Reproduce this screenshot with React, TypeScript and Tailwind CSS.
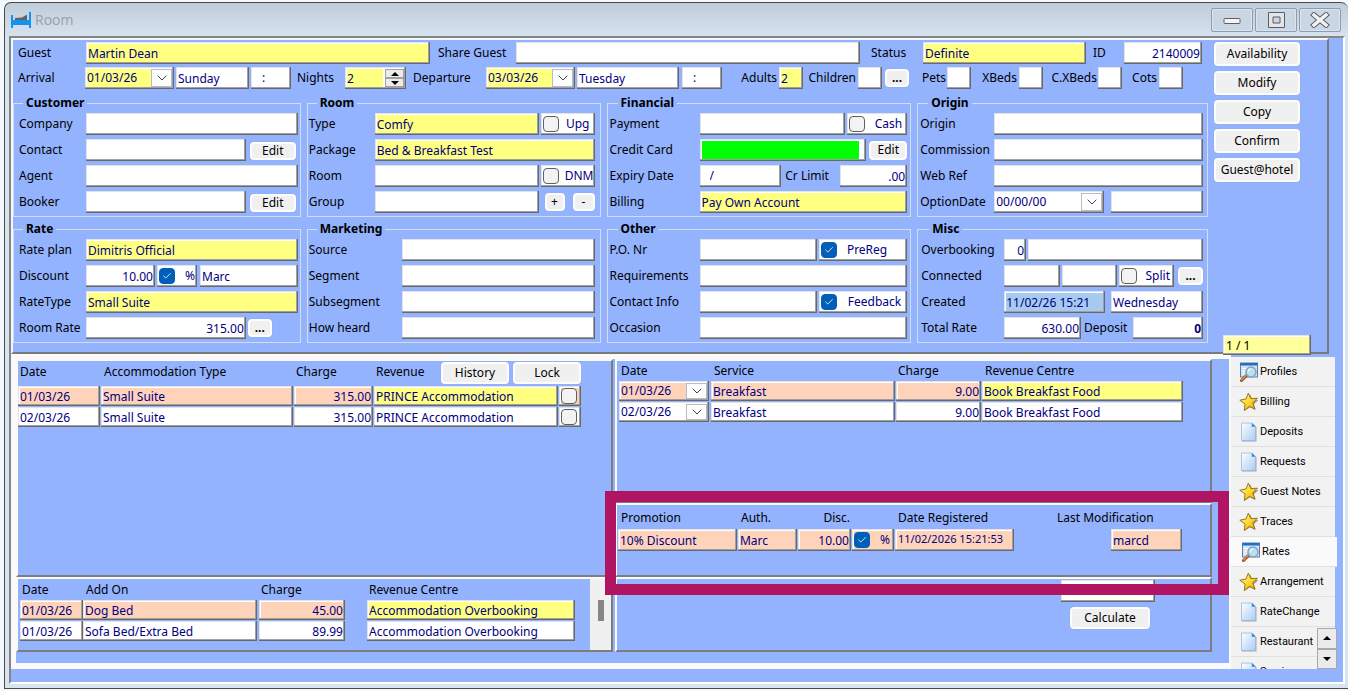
import React from 'react'
import clsx from 'clsx'
import { Check, ChevronDown } from 'lucide-react'

const bevel =
  "shadow-[inset_-1px_-1px_0_#696969,inset_-2px_-2px_0_#a0a0a0,inset_1px_1px_0_#e3e3e3,inset_2px_2px_0_#ffffff]"

const tones = {
  white: "bg-white",
  yellow: "bg-[#ffff80]",
  peach: "bg-[#ffd3ba]",
  blue: "bg-[#a6caf0]"
}

type Tone = keyof typeof tones

type FieldProps = {
  label: string
  value?: string
  tone?: Tone
  className?: string
}

const Field = ({ label, value = "", tone = "white", className = "flex-1" }: FieldProps) => (
  <input
    type="text"
    aria-label={label}
    defaultValue={value}
    className={clsx("h-[22px] min-w-0 rounded-none px-[2px] text-[12px] text-[#00007f] outline-none", bevel, tones[tone], className)}
  />
)

const Combo = ({ label, value, tone = "white", className = "w-[88px]", height = "h-[22px]" }: FieldProps & { height?: string }) => (
  <div className={clsx("relative flex", height, bevel, tones[tone], className)}>
    <select
      aria-label={label}
      className="h-full w-full appearance-none px-[2px] text-[12px] text-[#00007f] outline-none"
    >
      <option>{value}</option>
    </select>
    <span className="pointer-events-none absolute top-[2px] right-[2px] bottom-[2px] flex w-[21px] items-center justify-center border border-[#b4bccb] bg-[#fdfdfd] text-[#444444]">
      <ChevronDown size={16} strokeWidth={1.5} />
    </span>
  </div>
)

const Tick = ({ label, checked = false, id }: { label?: string; checked?: boolean; id?: string }) => (
  <span className="grid h-4 w-4 shrink-0">
    <input
      id={id}
      type="checkbox"
      aria-label={label}
      defaultChecked={checked}
      className="peer h-4 w-4 appearance-none rounded-[4px] border border-[#5f5f5f] bg-[#f3f3f3] [grid-area:1/1] checked:border-[#005fb8] checked:bg-[#005fb8]"
    />
    <Check
      size={10}
      strokeWidth={2}
      className="pointer-events-none invisible place-self-center text-white [grid-area:1/1] peer-checked:visible"
    />
  </span>
)

type TickFieldProps = {
  label: string
  checked?: boolean
  tone?: Tone
  className?: string
}

const TickField = ({ label, checked, tone = "white", className = "pr-[5px]" }: TickFieldProps) => (
  <label className={clsx("flex h-[22px] shrink-0 items-center justify-between pl-[2px] text-[12px] text-[#00007f]", bevel, tones[tone], className)}>
    <Tick checked={checked} />
    <span>{label}</span>
  </label>
)

const Button = ({ children, className, label }: { children: React.ReactNode; className?: string; label?: string }) => (
  <button
    type="button"
    aria-label={label}
    className={clsx("flex shrink-0 items-center justify-center rounded-[4px] border-2 border-[#fdfdfd] bg-[#f0f0f0] text-[12px] leading-none whitespace-nowrap text-black shadow-[0_0_1px_#8d99b5]", className)}
  >
    {children}
  </button>
)

const Caption = ({ children, className }: { children: React.ReactNode; className?: string }) => (
  <span className={clsx("shrink-0 whitespace-nowrap", className)}>{children}</span>
)

const Group = ({ title, className, legend = "ml-2", children }: { title: string; className?: string; legend?: string; children: React.ReactNode }) => (
  <fieldset className={clsx("min-w-0 border border-[#d5dcea] pb-[3px]", className)}>
    <legend className={clsx("px-[3px] text-[12px] leading-4 font-bold", legend)}>{title}</legend>
    <div className="flex flex-col gap-1 pt-[2px]">{children}</div>
  </fieldset>
)

const Row = ({ label, width, children }: { label: string; width: string; children: React.ReactNode }) => (
  <div className="flex h-[22px] items-center">
    <Caption className={width}>{label}</Caption>
    <div className="flex min-w-0 flex-1 items-center gap-[2px]">{children}</div>
  </div>
)

const Panel = ({ className, children }: { className?: string; children?: React.ReactNode }) => (
  <section className={clsx("min-w-0 border-2 border-t-[#fafafa] border-r-[#7d7d7d] border-b-[#7d7d7d] border-l-[#fafafa]", className)}>
    {children}
  </section>
)

const CellInput = ({ label, value, tone = "white", right }: FieldProps & { right?: boolean }) => (
  <input
    type="text"
    aria-label={label}
    defaultValue={value}
    className={clsx("block h-5 w-full min-w-0 rounded-none px-[2px] text-[12px] text-[#00007f] outline-none", right && "text-right", bevel, tones[tone])}
  />
)

const accommodation: { date: string; type: string; charge: string; revenue: string; tone: Tone; revenueTone: Tone }[] = [
  { date: "01/03/26", type: "Small Suite", charge: "315.00", revenue: "PRINCE Accommodation", tone: "peach", revenueTone: "yellow" },
  { date: "02/03/26", type: "Small Suite", charge: "315.00", revenue: "PRINCE Accommodation", tone: "white", revenueTone: "white" }
]

const services: { date: string; service: string; charge: string; centre: string; tone: Tone; centreTone: Tone }[] = [
  { date: "01/03/26", service: "Breakfast", charge: "9.00", centre: "Book Breakfast Food", tone: "peach", centreTone: "yellow" },
  { date: "02/03/26", service: "Breakfast", charge: "9.00", centre: "Book Breakfast Food", tone: "white", centreTone: "white" }
]

const addOns: { date: string; name: string; charge: string; centre: string; tone: Tone; centreTone: Tone }[] = [
  { date: "01/03/26", name: "Dog Bed", charge: "45.00", centre: "Accommodation Overbooking", tone: "peach", centreTone: "yellow" },
  { date: "01/03/26", name: "Sofa Bed/Extra Bed", charge: "89.99", centre: "Accommodation Overbooking", tone: "white", centreTone: "white" }
]

const actions = ["Availability", "Modify", "Copy", "Confirm", "Guest@hotel"]

const StarIcon = () => (
  <svg width="20" height="20" viewBox="0 0 20 20" className="shrink-0">
    <defs>
      <linearGradient id="star" x1="0" y1="0" x2="1" y2="1">
        <stop offset="0" stopColor="#fffbb0" />
        <stop offset="0.5" stopColor="#ffd92e" />
        <stop offset="1" stopColor="#e8a200" />
      </linearGradient>
    </defs>
    <path d="M11 2l2.4 5.6 6 .6-4.6 4 1.6 6-5.2-3-5.2 3.4 1.2-6.2L2.2 8.6l6-.8z" fill="#777777" opacity="0.7" />
    <path d="M9.300 1.200l2.500 5.400 6.600-.4-4.700 4.800 2.400 6-5.800-2.600-5 4.200.8-6.600L.800 8.200l6.200-1.200z" fill="url(#star)" stroke="#8f6a10" strokeWidth="0.9" strokeLinejoin="round" />
  </svg>
)

const PageIcon = () => (
  <svg width="20" height="20" viewBox="0 0 20 20" className="shrink-0">
    <defs>
      <linearGradient id="page" x1="0" y1="0" x2="1" y2="1">
        <stop offset="0" stopColor="#ffffff" />
        <stop offset="1" stopColor="#a9cbf3" />
      </linearGradient>
    </defs>
    <path d="M3 1.5h11l3.5 4V19.5H3z" fill="#6f7a88" opacity="0.6" />
    <path d="M2.5 1H13l3.5 3.5V18.5h-14z" fill="url(#page)" stroke="#9db8dc" strokeWidth="0.8" />
    <path d="M12.8 1l3.8 3.8h-3.8z" fill="#2d86dd" />
  </svg>
)

const SearchIcon = () => (
  <svg width="20" height="20" viewBox="0 0 20 20" className="shrink-0">
    <rect x="1.5" y="1" width="17" height="14" fill="#d4e3f5" stroke="#5b7fae" />
    <rect x="1.5" y="1" width="17" height="2.500" fill="#1f6fc9" />
    <path d="M3.5 6.5h4M3.5 9h3M3.5 11.500h2" stroke="#ffffff" />
    <path d="M7.500 13.500l-5 5" stroke="#8a4a1c" strokeWidth="3" strokeLinecap="round" />
    <path d="M7.300 13.300l-4.600 4.700" stroke="#e0904e" strokeWidth="1.500" strokeLinecap="round" />
    <circle cx="12" cy="10" r="5" fill="#b5e0f5" stroke="#8ea3b6" strokeWidth="1.500" />
    <path d="M9.300 9.300a3 3 0 0 1 3-2.300" stroke="#ffffff" strokeWidth="1.200" fill="none" />
  </svg>
)

const icons = { star: StarIcon, page: PageIcon, search: SearchIcon }

const tabs: { name: string; icon: keyof typeof icons }[] = [
  { name: "Profiles", icon: "search" },
  { name: "Billing", icon: "star" },
  { name: "Deposits", icon: "page" },
  { name: "Requests", icon: "page" },
  { name: "Guest Notes", icon: "star" },
  { name: "Traces", icon: "star" },
  { name: "Rates", icon: "search" },
  { name: "Arrangement", icon: "star" },
  { name: "RateChange", icon: "page" },
  { name: "Restaurant", icon: "page" },
  { name: "Services", icon: "page" }
]

const Arrow = ({ down }: { down?: boolean }) => (
  <svg width="8" height="4" viewBox="0 0 8 4">
    <path d={down ? "M0 0h8L4 4z" : "M0 4h8L4 0z"} fill="#000000" />
  </svg>
)

const TitleBar = () => (
  <header className="flex h-[33px] items-center pt-px pr-[4px] pl-[2px]">
    <svg width="20" height="17" viewBox="0 0 20 17">
      <path d="M4 8V6l7-.500 5-3V9H4z" fill="#5f6468" />
      <path d="M1 3v13M19 0v16" stroke="#0f95f5" strokeWidth="2" />
      <rect x="1" y="8" width="18" height="5" fill="#1592ee" />
    </svg>
    <h1 className="ml-[4px] flex-1 font-['Open_Sans',sans-serif] text-[14px] text-[#9a9ea3]">Room</h1>
    <div className="flex gap-[2px]">
      {["Minimize", "Maximize", "Close"].map((name) => (
        <button
          key={name}
          type="button"
          aria-label={name}
          className="flex h-6 w-[42px] items-center justify-center rounded-[2px] border border-[#8d9bb4] bg-[#c9d6e4] shadow-[inset_0_0_0_1px_#d9e4ef]"
        >
          {name === "Minimize" && (
            <svg width="18" height="14" viewBox="0 0 18 14">
              <rect x="1" y="5.500" width="16" height="5" rx="1" fill="#f5f5f5" stroke="#5b5d6b" />
            </svg>
          )}
          {name === "Maximize" && (
            <svg width="17" height="16" viewBox="0 0 17 16">
              <path d="M0.500 0.500h16v15h-16zM5 5v6h7V5z" fill="#e4e4e4" fillRule="evenodd" stroke="#5b5d6b" />
            </svg>
          )}
          {name === "Close" && (
            <svg width="20" height="16" viewBox="0 0 20 16">
              <path d="M4 3l12 10M16 3L4 13" stroke="#5b5d6b" strokeWidth="5.500" strokeLinecap="square" />
              <path d="M4 3l12 10M16 3L4 13" stroke="#f2f2f2" strokeWidth="3.500" strokeLinecap="square" />
            </svg>
          )}
        </button>
      ))}
    </div>
  </header>
)

const BookingHeader = () => (
  <div className="flex flex-col gap-[3px] pr-[6px] pl-[5px]">
    <div className="flex items-center">
      <Caption className="w-[68px]">Guest</Caption>
      <Field label="Guest" value="Martin Dean" tone="yellow" />
      <Caption className="w-[86px] pl-2">Share Guest</Caption>
      <Field label="Share Guest" />
      <Caption className="w-[63px] pl-[11px]">Status</Caption>
      <Field label="Status" value="Definite" tone="yellow" className="w-[163px]" />
      <Caption className="w-[38px] pl-[7px]">ID</Caption>
      <Field label="ID" value="2140009" className="w-[78px] text-right" />
    </div>
    <div className="flex items-center pr-[19px]">
      <Caption className="w-[67px]">Arrival</Caption>
      <Combo label="Arrival" value="01/03/26" tone="yellow" className="mr-[2px] w-[89px]" />
      <Field label="Arrival day" value="Sunday" className="mr-[2px] w-[73px]" />
      <div className={clsx("flex h-[22px] w-10 bg-white pl-[9px]", bevel)}>
        <input type="text" aria-label="Arrival time" defaultValue=":" className="w-[26px] px-[2px] text-[12px] text-[#00007f] outline-none" />
      </div>
      <Caption className="w-[54px] pl-[6px]">Nights</Caption>
      <div className={clsx("flex h-[22px] w-[61px] items-center bg-white p-[2px]", bevel)}>
        <input
          type="text"
          aria-label="Nights"
          defaultValue="2"
          className="h-full w-9 bg-[#ffff80] text-[12px] text-[#00007f] outline-none"
        />
        <div className="ml-[2px] flex h-full flex-1 flex-col">
          <button type="button" aria-label="More nights" className="flex flex-1 items-center justify-center border border-[#a0a0a0] bg-[#ececec]">
            <Arrow />
          </button>
          <button type="button" aria-label="Fewer nights" className="flex flex-1 items-center justify-center border border-[#a0a0a0] bg-[#ececec]">
            <Arrow down />
          </button>
        </div>
      </div>
      <Caption className="w-20 pl-[7px]">Departure</Caption>
      <Combo label="Departure" value="03/03/26" tone="yellow" className="mr-[2px] w-[89px]" />
      <Field label="Departure day" value="Tuesday" className="mr-[3px] flex-1" />
      <div className={clsx("flex h-[22px] w-10 bg-white pl-[9px]", bevel)}>
        <input type="text" aria-label="Departure time" defaultValue=":" className="w-[26px] px-[2px] text-[12px] text-[#00007f] outline-none" />
      </div>
      <Caption className="w-[57px] pr-[2px] text-right">Adults</Caption>
      <Field label="Adults" value="2" tone="yellow" className="w-6" />
      <Caption className="w-[55px] pr-[2px] text-right">Children</Caption>
      <Field label="Children" className="w-6" />
      <Button label="More guests" className="ml-[3px] h-[18px] w-6 font-bold">...</Button>
      <Caption className="w-[38px] pr-px text-right">Pets</Caption>
      <Field label="Pets" className="w-6" />
      <Caption className="w-12 pr-[2px] text-right">XBeds</Caption>
      <Field label="XBeds" className="w-6" />
      <Caption className="w-[55px] pr-px text-right">C.XBeds</Caption>
      <Field label="C.XBeds" className="w-6" />
      <Caption className="w-[37px] pr-[2px] text-right">Cots</Caption>
      <Field label="Cots" className="w-6" />
    </div>
  </div>
)

const BookingGroups = () => (
  <div className="mt-[6px] grid grid-cols-[288fr_294fr_305fr_291fr] gap-x-[6px] gap-y-1">
    <Group title="Customer" legend="ml-1" className="pr-[2px] pl-[5px]">
      <Row label="Company" width="w-[67px]">
        <Field label="Company" />
      </Row>
      <Row label="Contact" width="w-[67px]">
        <Field label="Contact" />
        <Button className="mx-[2px] mt-px h-[18px] w-[46px]">Edit</Button>
      </Row>
      <Row label="Agent" width="w-[67px]">
        <Field label="Agent" />
      </Row>
      <Row label="Booker" width="w-[67px]">
        <Field label="Booker" />
        <Button className="mx-[2px] mt-px h-[18px] w-[46px]">Edit</Button>
      </Row>
    </Group>

    <Group title="Room" className="pr-[5px] pl-px">
      <Row label="Type" width="w-[66px]">
        <Field label="Type" value="Comfy" tone="yellow" />
        <TickField label="Upg" className="w-[54px] pr-[5px]" />
      </Row>
      <Row label="Package" width="w-[66px]">
        <Field label="Package" value="Bed & Breakfast Test" tone="yellow" />
      </Row>
      <Row label="Room" width="w-[66px]">
        <Field label="Room" />
        <TickField label="DNM" className="w-[54px] pr-px" />
      </Row>
      <Row label="Group" width="w-[66px]">
        <Field label="Group" />
        <Button className="mr-[6px] ml-[4px] h-[18px] w-5">+</Button>
        <Button className="h-[18px] w-[22px]">-</Button>
      </Row>
    </Group>

    <Group title="Financial" className="pr-[3px] pl-[2px]">
      <Row label="Payment" width="w-[90px]">
        <Field label="Payment" />
        <TickField label="Cash" className="w-[60px] pr-[5px]" />
      </Row>
      <Row label="Credit Card" width="w-[90px]">
        <div className={clsx("flex h-[22px] flex-1 items-center bg-white pr-[7px] pl-[2px]", bevel)}>
          <input type="text" aria-label="Credit Card" className="h-[18px] w-full min-w-0 bg-[#00ff00] outline-none" />
        </div>
        <Button className="ml-px h-[19px] w-[38px]">Edit</Button>
      </Row>
      <Row label="Expiry Date" width="w-[90px]">
        <div className={clsx("flex h-[22px] min-w-0 flex-1 bg-white pl-[8px]", bevel)}>
          <input type="text" aria-label="Expiry Date" defaultValue="/" className="mr-[2px] w-full min-w-0 px-[2px] text-[12px] text-[#00007f] outline-none" />
        </div>
        <Caption className="w-[55px] pl-[2px]">Cr Limit</Caption>
        <Field label="Cr Limit" value=".00" className="w-[67px] text-right" />
      </Row>
      <Row label="Billing" width="w-[90px]">
        <Field label="Billing" value="Pay Own Account" tone="yellow" />
      </Row>
    </Group>

    <Group title="Origin" className="pr-[4px] pl-[2px]">
      <Row label="Origin" width="w-[74px]">
        <Field label="Origin" />
      </Row>
      <Row label="Commission" width="w-[74px]">
        <Field label="Commission" />
      </Row>
      <Row label="Web Ref" width="w-[74px]">
        <Field label="Web Ref" />
      </Row>
      <Row label="OptionDate" width="w-[74px]">
        <Combo label="OptionDate" value="00/00/00" className="mr-[5px] flex-1" />
        <Field label="Option day" className="w-[92px]" />
      </Row>
    </Group>

    <Group title="Rate" legend="ml-1" className="pr-[2px] pl-[5px]">
      <Row label="Rate plan" width="w-[67px]">
        <Field label="Rate plan" value="Dimitris Official" tone="yellow" />
      </Row>
      <Row label="Discount" width="w-[67px]">
        <Field label="Discount" value="10.00" className="w-[69px] text-right" />
        <TickField label="%" checked className="w-10 pr-[2px]" />
        <Field label="Discount authorised by" value="Marc" className="ml-px flex-1" />
      </Row>
      <Row label="RateType" width="w-[67px]">
        <Field label="RateType" value="Small Suite" tone="yellow" />
      </Row>
      <Row label="Room Rate" width="w-[67px]">
        <Field label="Room Rate" value="315.00" className="flex-1 text-right" />
        <Button label="Room rate details" className="mr-[26px] h-[18px] w-6 font-bold">...</Button>
      </Row>
    </Group>

    <Group title="Marketing" className="pr-[5px] pl-px">
      {["Source", "Segment", "Subsegment", "How heard"].map((name) => (
        <Row key={name} label={name} width="w-[93px]">
          <Field label={name} />
        </Row>
      ))}
    </Group>

    <Group title="Other" className="pr-[3px] pl-[2px]">
      <Row label="P.O. Nr" width="w-[90px]">
        <Field label="P.O. Nr" />
        <TickField label="PreReg" checked className="w-[88px] pr-[20px]" />
      </Row>
      <Row label="Requirements" width="w-[90px]">
        <Field label="Requirements" />
      </Row>
      <Row label="Contact Info" width="w-[90px]">
        <Field label="Contact Info" />
        <TickField label="Feedback" checked className="w-[88px] pr-[6px]" />
      </Row>
      <Row label="Occasion" width="w-[90px]">
        <Field label="Occasion" />
      </Row>
    </Group>

    <Group title="Misc" className="pr-[4px] pl-[3px]">
      <Row label="Overbooking" width="w-[83px]">
        <Field label="Overbooking" value="0" className="w-[22px] text-right" />
        <Field label="Overbooking note" />
      </Row>
      <Row label="Connected" width="w-[83px]">
        <Field label="Connected" />
        <Field label="Connected to" />
        <TickField label="Split" className="w-[55px] pr-[4px]" />
        <Button label="Split details" className="ml-[2px] h-[18px] w-[25px] font-bold">...</Button>
      </Row>
      <Row label="Created" width="w-[83px]">
        <Field label="Created" value="11/02/26 15:21" tone="blue" className="mr-1 flex-1" />
        <Field label="Created day" value="Wednesday" className="w-[92px]" />
      </Row>
      <Row label="Total Rate" width="w-[83px]">
        <Field label="Total Rate" value="630.00" className="flex-1 text-right" />
        <Caption className="w-[48px] pl-px">Deposit</Caption>
        <Field label="Deposit" value="0" className="w-[70px] text-right font-bold" />
      </Row>
    </Group>
  </div>
)

const AccommodationPanel = () => (
  <Panel className="pr-[30px]">
    <table className="w-full table-fixed text-left">
      <colgroup>
        <col className="w-[83px]" />
        <col />
        <col className="w-[80px]" />
        <col className="w-[185px]" />
        <col className="w-[22px]" />
      </colgroup>
      <thead>
        <tr className="h-[25px]">
          <th className="pb-1 pl-[2px] font-normal">Date</th>
          <th className="pb-1 pl-[3px] font-normal">Accommodation Type</th>
          <th className="pb-1 pl-[2px] font-normal">Charge</th>
          <th colSpan={2} className="pb-px pl-[2px] font-normal">
            <div className="flex items-center">
              <span className="flex-1 pb-[3px]">Revenue</span>
              <Button className="mr-1 h-[22px] w-[68px]">History</Button>
              <Button className="h-[22px] w-[68px]">Lock</Button>
            </div>
          </th>
        </tr>
      </thead>
      <tbody>
        {accommodation.map((row) => (
          <tr key={row.date} className="h-[21px] align-top">
            <td className="pr-px"><CellInput label="Date" value={row.date} tone={row.tone} /></td>
            <td className="pr-px"><CellInput label="Accommodation Type" value={row.type} tone={row.tone} /></td>
            <td className="pr-px"><CellInput label="Charge" value={row.charge} tone={row.tone} right /></td>
            <td className="pr-px"><CellInput label="Revenue" value={row.revenue} tone={row.revenueTone} /></td>
            <td>
              <div className={clsx("flex h-5 items-center pl-[2px]", bevel, tones[row.tone])}>
                <Tick label={`Lock ${row.date}`} />
              </div>
            </td>
          </tr>
        ))}
      </tbody>
    </table>
  </Panel>
)

const ServicePanel = () => (
  <Panel className="h-[144px] pr-[27px] pl-[2px]">
    <table className="w-full table-fixed text-left">
      <colgroup>
        <col className="w-[92px]" />
        <col />
        <col className="w-[86px]" />
        <col className="w-[201px]" />
      </colgroup>
      <thead>
        <tr className="h-5">
          <th className="pl-[2px] font-normal">Date</th>
          <th className="pl-[3px] font-normal">Service</th>
          <th className="pl-[2px] font-normal">Charge</th>
          <th className="pl-[3px] font-normal">Revenue Centre</th>
        </tr>
      </thead>
      <tbody>
        {services.map((row) => (
          <tr key={row.date} className="h-[21px] align-top">
            <td className="pr-[2px]"><Combo label="Date" value={row.date} tone={row.tone} className="w-full" height="h-5" /></td>
            <td className="pr-px"><CellInput label="Service" value={row.service} tone={row.tone} /></td>
            <td className="pr-px"><CellInput label="Charge" value={row.charge} tone={row.tone} right /></td>
            <td><CellInput label="Revenue Centre" value={row.centre} tone={row.centreTone} /></td>
          </tr>
        ))}
      </tbody>
    </table>
  </Panel>
)

const PromotionPanel = () => (
  <Panel className="h-[74px] pr-[28px] pl-px">
    <table className="w-full table-fixed text-left">
      <colgroup>
        <col />
        <col className="w-[60px]" />
        <col className="w-[54px]" />
        <col className="w-[43px]" />
        <col className="w-[119px]" />
        <col className="w-[97px]" />
        <col className="w-[71px]" />
      </colgroup>
      <thead>
        <tr className="h-6">
          <th className="pt-[2px] pl-[3px] font-normal">Promotion</th>
          <th className="pt-[2px] pl-[3px] font-normal">Auth.</th>
          <th className="pt-[2px] pr-[2px] text-right font-normal">Disc.</th>
          <td />
          <th className="pt-[2px] pl-[3px] font-normal whitespace-nowrap">Date Registered</th>
          <th colSpan={2} className="pt-[2px] pl-[43px] font-normal whitespace-nowrap">Last Modification</th>
        </tr>
      </thead>
      <tbody>
        <tr>
          <td className="pr-px"><Field label="Promotion" value="10% Discount" tone="peach" className="block w-full" /></td>
          <td className="pr-px"><Field label="Auth." value="Marc" tone="peach" className="block w-full" /></td>
          <td className="pr-px"><Field label="Disc." value="10.00" tone="peach" className="block w-full text-right" /></td>
          <td className="pr-px"><TickField label="%" checked tone="peach" className="w-full pr-[4px]" /></td>
          <td>
            <input
              type="text"
              aria-label="Date Registered"
              defaultValue="11/02/2026 15:21:53"
              className={clsx("block h-[22px] w-full bg-[#ffd3ba] px-[3px] pb-[3px] text-[11px] text-[#00007f] outline-none", bevel)}
            />
          </td>
          <td />
          <td><Field label="Last Modification" value="marcd" tone="peach" className="block w-full" /></td>
        </tr>
      </tbody>
    </table>
  </Panel>
)

const AddOnPanel = () => (
  <Panel className="flex h-[75px]">
    <div className="flex-1 pr-[15px] pl-[2px]">
      <table className="w-full table-fixed text-left">
        <colgroup>
          <col className="w-[63px]" />
          <col />
          <col className="w-[86px]" />
          <col className="w-[22px]" />
          <col className="w-[208px]" />
        </colgroup>
        <thead>
          <tr className="h-[21px]">
            <th className="pl-[2px] font-normal">Date</th>
            <th className="pl-[3px] font-normal">Add On</th>
            <th className="pl-[2px] font-normal">Charge</th>
            <td />
            <th className="pl-[2px] font-normal">Revenue Centre</th>
          </tr>
        </thead>
        <tbody>
          {addOns.map((row) => (
            <tr key={row.name} className="h-[21px] align-top">
              <td><CellInput label="Date" value={row.date} tone={row.tone} /></td>
              <td className="pr-[2px]"><CellInput label="Add On" value={row.name} tone={row.tone} /></td>
              <td><CellInput label="Charge" value={row.charge} tone={row.tone} right /></td>
              <td />
              <td><CellInput label="Revenue Centre" value={row.centre} tone={row.centreTone} /></td>
            </tr>
          ))}
        </tbody>
      </table>
    </div>
    <div className="flex w-[21px] justify-center bg-[#f0f0f0] pt-[21px]">
      <div className="h-[21px] w-[6px] bg-[#858585]" />
    </div>
  </Panel>
)

const Sidebar = () => (
  <nav className="relative mt-[3px] w-[112px] shrink-0">
    <ul className="h-[312px] overflow-hidden">
      {tabs.map((tab) => {
        const Icon = icons[tab.icon]
        const active = tab.name === "Rates"
        return (
          <li key={tab.name} className={clsx("h-[30px]", active ? "w-[106px]" : "w-[104px]")}>
            <a
              href="#"
              className={clsx(
                "flex h-full items-center gap-px border-b border-[#e0e0e0] font-[Roboto,sans-serif] text-[11px] text-black",
                active ? "bg-[#fafafa] pl-[10px]" : "bg-[#f2f2f2] pl-[8px]"
              )}
            >
              <Icon />
              {tab.name}
            </a>
          </li>
        )
      })}
    </ul>
    <div className="absolute right-[6px] bottom-0 flex h-[41px] w-5 flex-col bg-[#f0f0f0]">
      <button type="button" aria-label="Scroll up" className="flex flex-1 items-center justify-center border border-[#a8a8a8] bg-[#ebebeb]">
        <Arrow />
      </button>
      <button type="button" aria-label="Scroll down" className="flex flex-1 items-center justify-center border border-[#a8a8a8] bg-[#ebebeb]">
        <Arrow down />
      </button>
    </div>
  </nav>
)

const App = () => {
  return (
    <main className="min-h-screen bg-[#f5f9fe] pt-[2px] pl-1 font-['Noto_Sans',sans-serif] text-[12px] leading-4 text-black">
      <div className="rounded-t-[7px] border border-r-0 border-[#4a4a4a] bg-[linear-gradient(#bfccd9,#d8e4f0_36px)] pr-[3px] pb-[4px] pl-[4px]">
        <TitleBar />
        <div className="border-2 border-t-[#858585] border-r-white border-b-white border-l-[#858585] bg-[#93b3ff] pb-[13px]">
          <div className="mr-[14px] flex border-2 border-t-[#f4f7ff] border-r-[#7a7a7a] border-b-[#7a7a7a] border-l-[#f4f7ff] pt-[2px]">
            <div className="min-w-0 flex-1 pb-[9px]">
              <BookingHeader />
              <BookingGroups />
            </div>
            <div className="relative ml-[6px] w-[113px] shrink-0">
              <div className="flex w-[86px] flex-col gap-[5px]">
                {actions.map((name) => (
                  <Button key={name} className="h-6 w-full">{name}</Button>
                ))}
              </div>
              <input
                type="text"
                aria-label="Record"
                defaultValue="1 / 1"
                className={clsx("absolute -bottom-[3px] left-[9px] h-5 w-[88px] bg-[#ffff9c] px-[3px] text-[12px] text-black outline-none", bevel)}
              />
            </div>
          </div>

          <div className="flex">
            <div className="min-w-0 flex-1 bg-[#fafafa] pt-[5px] pr-[2px] pb-[5px] pl-[5px]">
              <div className="relative grid grid-cols-2 gap-x-[2px] bg-[#93b3ff] pr-[17px] pb-[11px]">
                <AccommodationPanel />
                <div className="flex min-w-0 flex-col">
                  <ServicePanel />
                  <PromotionPanel />
                </div>
                <AddOnPanel />
                <Panel className="flex flex-col items-end pt-px">
                  <Field label="Recalculation" className="mr-[55px] h-5 w-[94px]" />
                  <Button className="mt-[5px] mr-[60px] h-[22px] w-[80px]">Calculate</Button>
                </Panel>
                <div className="pointer-events-none absolute top-[132px] right-0 h-[104px] w-[624px] border-[11px] border-[#b01563]" />
              </div>
            </div>
            <Sidebar />
          </div>
        </div>
      </div>
    </main>
  )
}

export default App
